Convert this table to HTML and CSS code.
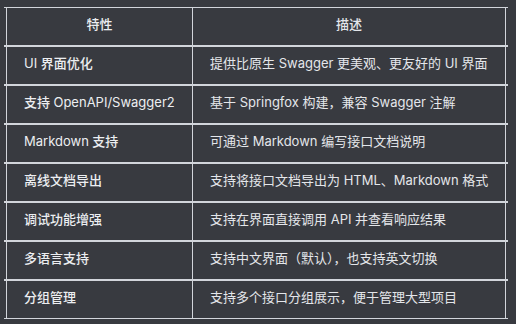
FILE: index.html
```html
<!DOCTYPE html>
<html lang="zh">
<head>
<meta charset="utf-8">
<link rel="stylesheet" href="styles.css">
</head>
<body>
<div class="table">
  <div class="row head">
    <div class="cell c1">特性</div>
    <div class="cell c2">描述</div>
  </div>
  <div class="row">
    <div class="cell c1"><span class="lat">UI</span> 界面优化</div>
    <div class="cell c2">提供比原生 Swagger 更美观、更友好的 UI 界面</div>
  </div>
  <div class="row">
    <div class="cell c1">支持 <span class="lat">OpenAPI/Swagger2</span></div>
    <div class="cell c2">基于 Springfox 构建，兼容 Swagger 注解</div>
  </div>
  <div class="row">
    <div class="cell c1"><span class="lat">Markdown</span> 支持</div>
    <div class="cell c2">可通过 Markdown 编写接口文档说明</div>
  </div>
  <div class="row">
    <div class="cell c1">离线文档导出</div>
    <div class="cell c2">支持将接口文档导出为 HTML、Markdown 格式</div>
  </div>
  <div class="row">
    <div class="cell c1">调试功能增强</div>
    <div class="cell c2">支持在界面直接调用 API 并查看响应结果</div>
  </div>
  <div class="row">
    <div class="cell c1">多语言支持</div>
    <div class="cell c2">支持中文界面（默认），也支持英文切换</div>
  </div>
  <div class="row last">
    <div class="cell c1">分组管理</div>
    <div class="cell c2">支持多个接口分组展示，便于管理大型项目</div>
  </div>
</div>
</body>
</html>
```
FILE: styles.css
```css
html, body {
  margin: 0;
  padding: 0;
  background: #383a40;
}
body {
  font-family: Inter, "Noto Sans CJK SC", sans-serif;
  font-size: 13px;
  color: #e4e6ea;
}
.table {
  margin: 7px 8px 0 4px;
  width: 504px;
}
.row {
  display: grid;
  grid-template-columns: 186px 314px;
  padding: 0 2px;
  border-top: 2px solid #d2d5db;
}
.row.head {
  border-top-width: 1px;
}
.row.last {
  border-bottom: 1px solid #d2d5db;
}
.cell {
  height: 37px;
  display: flex;
  align-items: center;
  padding: 0 0 6px 17px;
  border-left: 1px solid #d2d5db;
  box-sizing: border-box;
  white-space: pre;
}
.c1 {
  font-weight: 500;
  color: #eceef1;
}
.c1 .lat {
  font-weight: 400;
}
.c2 {
  border-right: 1px solid #d2d5db;
}
.head .cell {
  justify-content: center;
  padding-left: 0;
  font-weight: 500;
}
```
